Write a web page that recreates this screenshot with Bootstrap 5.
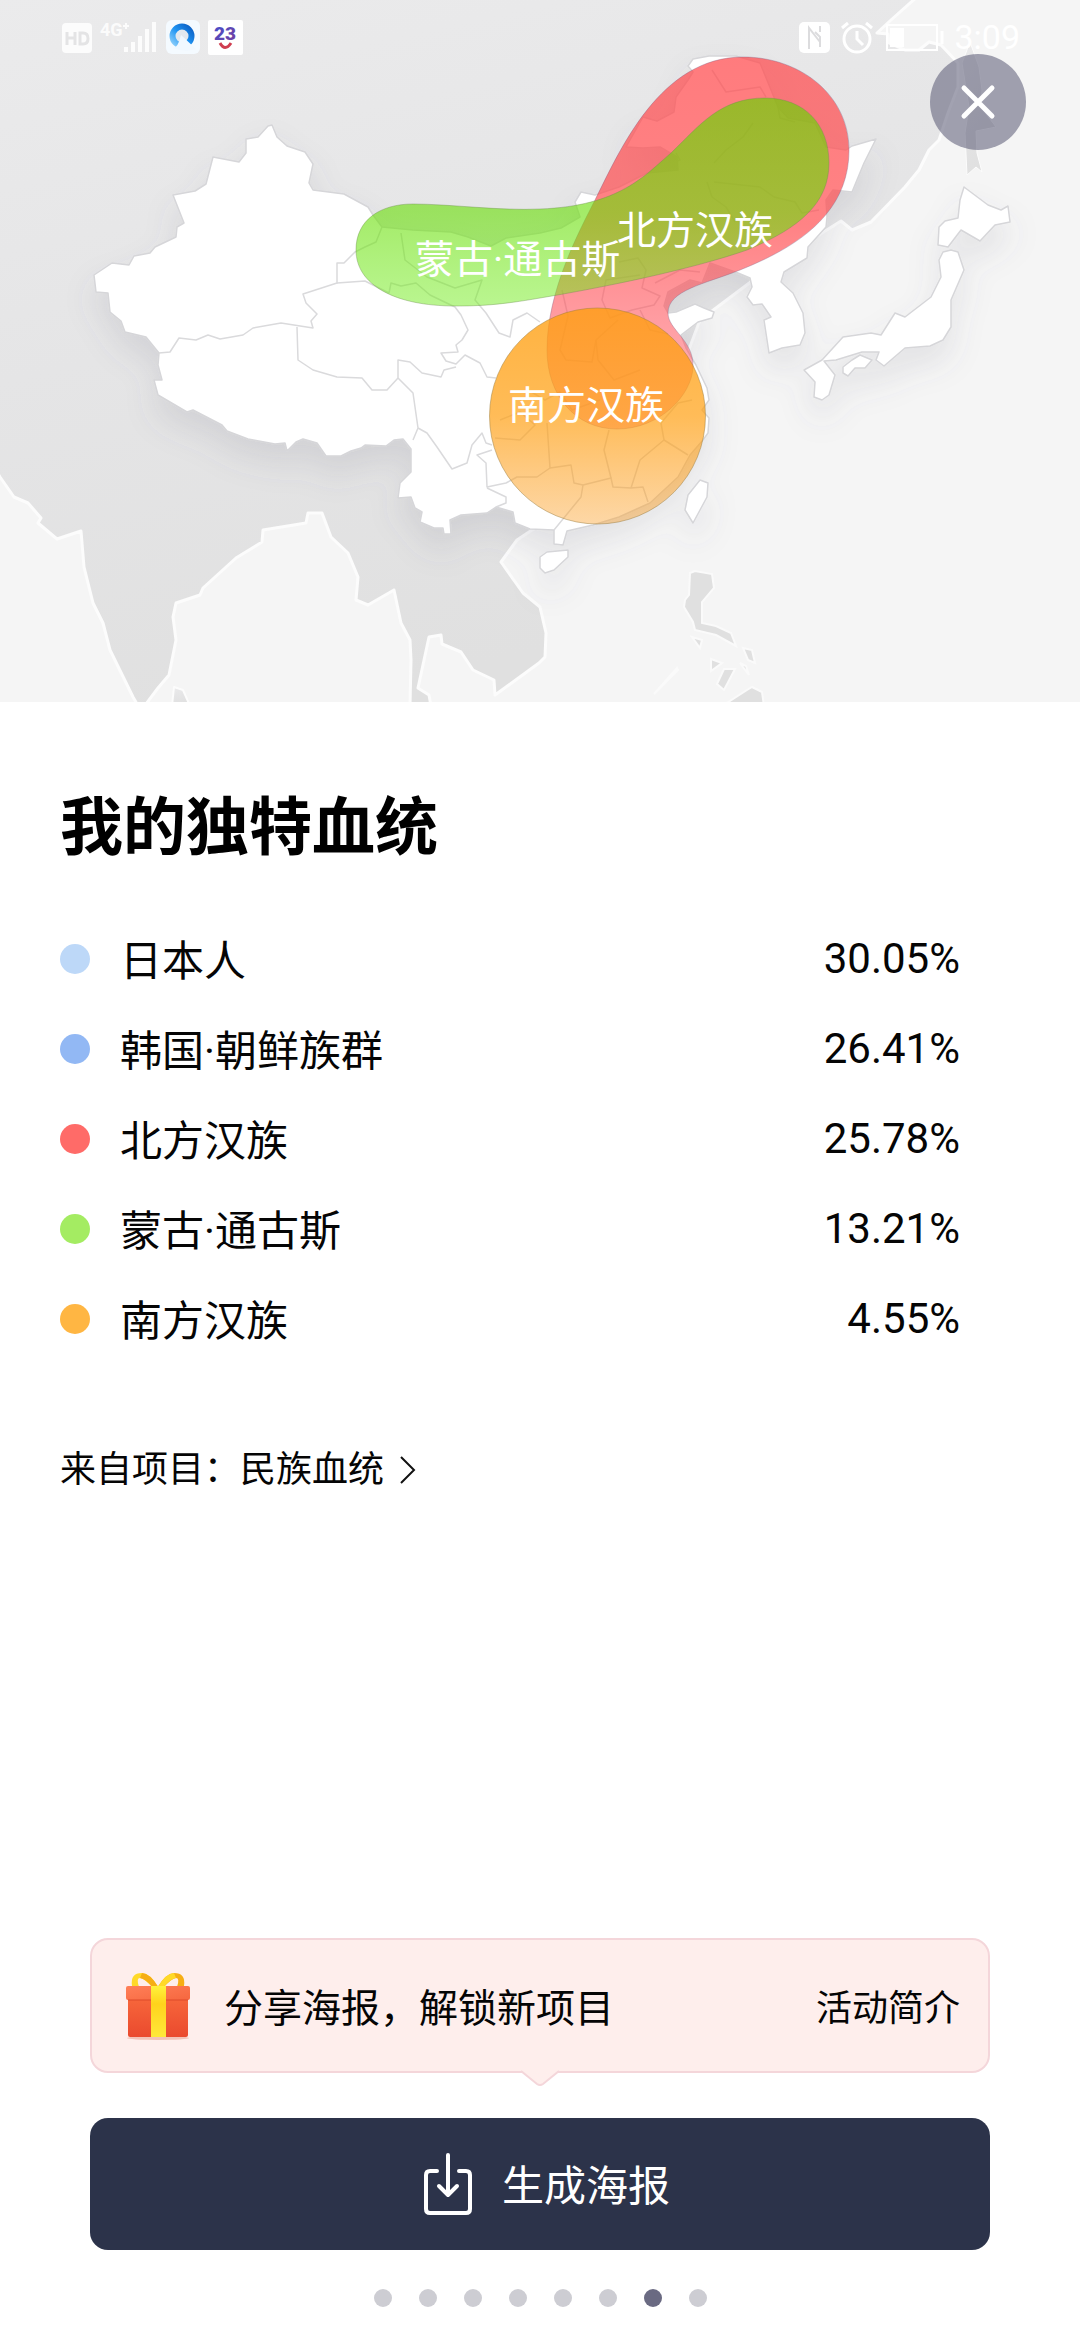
<!DOCTYPE html>
<html lang="zh-CN">
<head>
<meta charset="utf-8">
<meta name="viewport" content="width=device-width, initial-scale=1">
<title>我的独特血统</title>
<link rel="stylesheet" href="https://cdn.jsdelivr.net/npm/bootstrap@5.3.0/dist/css/bootstrap.min.css">
<style>
  body { font-family: Roboto, "Noto Sans CJK SC", sans-serif; color: #050505; background: #fff; }
  .map-art { display: block; width: 100%; height: auto; }
  .map-label { font-size: 39px; fill: #fff; }
  .status-bar { height: 74px; padding: 0 60px; color: #fff; }
  .clock-text { font-size: 34px; line-height: 40px; }
  .close-btn { top: 54px; right: 54px; width: 96px; height: 96px; background: rgba(88, 88, 114, .55); }
  .report { padding: 88px 60px 0; }
  .report-title { font-size: 63px; line-height: 76px; font-weight: 700; margin-bottom: 48px; color: #000; }
  .ancestry-row { height: 90px; padding-right: 60px; font-size: 42px; line-height: 50px; }
  .ancestry-dot { width: 30px; height: 30px; margin-right: 30px; }
  .ancestry-name { padding-top: 6px; }
  .source-link { margin-top: 84px; font-size: 36px; line-height: 44px; gap: 16px; color: #050505; }
  .page-foot { padding: 0 90px 33px; }
  .promo { min-height: 135px; padding: 0 28px 0 32px; background: #feeeec; border: 2px solid #f4d6da; border-radius: 18px; font-size: 39px; line-height: 48px; }
  .promo-gift { margin-right: 32px; }
  .promo-text { padding-top: 6px; }
  .promo-more { font-size: 36px; color: #050505; }
  .promo-tail { left: 50%; top: 100%; margin: -3px 0 0 -22px; }
  .make-btn { margin-top: 45px; min-height: 132px; padding: 0 0 0 14px; gap: 30px; border-radius: 18px; background: #2c334a; color: #fff; font-size: 42px; line-height: 50px; }
  .make-btn:hover { background: #363e58; color: #fff; }
  .pager { gap: 27px; margin-top: 39px; }
  .pager-dot { width: 18px; height: 18px; background: #cdcdd3; }
  .pager-dot.active { background: #6a6a82; }
</style>
</head>
<body>
<div class="d-flex flex-column min-vh-100">

  <header class="position-relative">
    <svg class="map-art" viewBox="0 0 1080 702" role="img" aria-label="血统分布地图">
      <defs>
        <linearGradient id="land" x1="0" y1="0" x2="0.3" y2="1"><stop offset="0" stop-color="#ebebec"/><stop offset=".5" stop-color="#e5e5e6"/><stop offset="1" stop-color="#e0e0e0"/></linearGradient>
        <linearGradient id="north" x1="0" y1="0" x2="0" y2="1"><stop offset="0" stop-color="#ff4d50" stop-opacity=".74"/><stop offset=".45" stop-color="#ff4d50" stop-opacity=".7"/><stop offset="1" stop-color="#ff5060" stop-opacity=".4"/></linearGradient>
        <linearGradient id="steppe" x1="0" y1="0" x2="0" y2="1"><stop offset="0" stop-color="#66d600" stop-opacity=".66"/><stop offset=".55" stop-color="#6cdf0c" stop-opacity=".62"/><stop offset="1" stop-color="#74ec20" stop-opacity=".5"/></linearGradient>
        <linearGradient id="south" x1="0" y1="0" x2="0" y2="1"><stop offset="0" stop-color="#ff9f10" stop-opacity=".8"/><stop offset=".5" stop-color="#ff9f10" stop-opacity=".7"/><stop offset="1" stop-color="#fba02a" stop-opacity=".42"/></linearGradient>
        <filter id="lift" x="-10%" y="-10%" width="120%" height="130%"><feDropShadow dx="0" dy="18" stdDeviation="15" flood-color="#606078" flood-opacity=".13"/></filter>
      </defs>
      <rect width="1080" height="702" fill="#f5f5f5"/>
      <!-- neighbouring land -->
      <g fill="url(#land)" stroke="#fcfcfc" stroke-width="3" stroke-linejoin="round">
        <path d="M-4-4H918L891 20 877 33 888 34 889 43 905 50 919 50 929 42 941 45 958 63 958 87 948 113 939 140 929 150 919 170 905 187 871 222 852 230 841 221 822 233 780 260 700 320 640 480 532 530 517 540 501 562 523 593 540 607 546 633 545 657 539 663 495 695 494 680 473 670 461 652 442 644 441 635 429 637 418 688 429 695 431 706H410L411 660 410 640 401 623 394 590 368 605 356 600 358 577 348 553 331 537 322 513 308 513 306 523 263 530 262 542 236 558 203 588 200 595 176 603 173 617 176 640 169 675 158 688 146 704 137 704 133 697 110 650 103 623 93 603 84 567 81 531 57 539 38 523 41 518 28 503 14 497 0 477-4 470Z"/>
        <path d="M172 706 174 687 183 690 190 706Z" stroke-width="2"/>
        <path d="M962 63 970 42 979 67 982 90 981 107 996 127 976 131 977 153 982 172 976 167 967 175 965 133 969 107Z" stroke-width="1"/>
      </g>
      <path d="M690 573 695 571 712 574 714 588 702 602 702 623 716 626 731 633 736 646 716 635 695 630 693 622 684 607 685 600 689 595ZM692 637 702 640 700 648ZM743 648 752 650 755 663 748 660ZM711 659 722 663 711 671ZM724 669 735 669 724 690 717 684ZM740 663 746 666 749 675ZM677 668 654 694 678 670ZM722 706 747 690 752 687 762 692 764 706Z" fill="#e0e0e0" stroke="#fafafa" stroke-width="2"/>
      <!-- highlighted countries -->
      <g fill="#fff" stroke="#d6d6d9" stroke-width="1.5" stroke-linejoin="round" filter="url(#lift)">
        <path d="M272 125 277 137 287 146 305 152 313 164 309 183 313 190 344 194 368 207 373 215 382 227 413 230 451 232 468 237 491 246 506 238 540 233 561 228 580 217 575 202 581 192 595 195 619 187 647 173 678 170 677 157 660 147 643 148 626 147 643 117 657 121 674 112 676 97 688 80 693 72 688 66 693 59 709 56 736 56 760 63 778 107 788 118 815 123 826 147 846 150 852 146 876 139 864 163 852 192 833 190 826 200 827 217 826 227 817 237 808 247 807 258 784 272 781 282 793 293 803 313 805 333 800 345 782 348 769 353 764 320 771 317 762 304 753 305 747 297 752 287 750 278 738 273 710 263 702 283 690 280 668 292 664 306 668 313 676 312 695 304 704 308 714 312 712 318 698 322 681 335 686 348 696 365 707 388 709 400 702 410 709 418 708 433 703 440 690 455 678 477 650 503 619 517 593 525 567 531 563 545 554 544 554 530 530 529 515 523 513 512 496 507 487 513 461 515 450 520 451 534 444 534 443 528 434 528 420 522 422 512 415 508 411 497 398 498 400 483 411 472 411 449 403 439 394 440 386 446 365 445 361 448 351 451 341 456 326 456 317 443 303 439 296 442 287 451 285 443 275 444 248 439 227 431 222 425 193 410 187 412 158 395 154 380 162 380 158 365 159 353 146 337 125 332 121 321 110 312 108 293 96 292 94 275 112 263 129 265 134 256 150 253 155 247 176 237 177 227 184 223 173 195 195 191 206 184 213 157 239 162 246 153 246 139 258 137 268 126Z"/>
        <path d="M964 187 988 205 1001 210 1008 206 1010 222 995 225 980 241 961 230 948 247 938 245 939 227 945 221 958 218 960 200Z"/>
        <path d="M943 252 951 250 958 252 964 270 951 300 951 327 943 340 930 346 905 348 884 366 876 360 879 352 862 352 836 360 824 361 835 375 829 395 822 400 814 397 815 382 804 370 822 360 843 337 871 333 881 335 895 313 905 317 931 297 941 277 939 260Z"/>
        <path d="M843 367 852 360 860 355 872 360 865 368 855 368 848 376 843 373ZM700 480 708 483 707 497 693 523 685 510 688 495ZM540 557 547 552 568 550 568 557 554 570 545 573 540 568Z"/>
      </g>
      <!-- province borders -->
      <g fill="none" stroke="#dadadc" stroke-width="1.5" stroke-linejoin="round">
        <path d="M159 353 170 352 179 338 196 340 208 335 220 339 243 335 253 328 281 323 313 328 311 321 317 314 306 303 303 294 337 283 337 263 344 263 355 252 365 247 376 242 382 227"/>
        <path d="M337 283 365 281 389 293 391 283 401 286 416 283 430 295 455 307 461 315 468 330 462 340 456 345 458 352 441 353 446 361 456 364 465 355 480 363 487 377 496 378"/>
        <path d="M297 327 298 360 313 370 337 377 362 378 372 390 387 390 398 378 398 360 410 362 422 373 441 377 444 370 456 367M398 378 413 393 418 428 413 440M418 428 427 433 437 447 452 469 467 463 472 445 482 433 486 443 492 445"/>
        <path d="M492 450 477 455 486 463 487 487 506 483 517 477 537 477 550 468 571 465 574 483 583 485 581 497 554 530M487 488 506 497 506 503 496 507M547 423 550 468M583 485 611 478 604 450 609 430M611 478 613 487 631 488 640 460 664 440 688 455M664 440 661 423 678 403 692 400M631 488 643 487 648 502"/>
        <path d="M401 233 405 260 427 277 455 288 482 280 475 300 486 313 499 333 510 337 513 320 527 313 540 322M712 70 726 92 760 87 766 97M707 182 712 197 726 207 735 222M714 182 760 187 774 197 795 202 802 213 819 210M714 163 726 150 743 137 753 123M647 173 680 160 676 153M778 107 780 118 795 122M619 262 638 258 646 270 642 288 660 296 654 305 632 310 610 318 602 300 606 280 640 275M655 283 680 270 700 272M562 290 568 316 560 350 566 360 592 362 596 340 618 320M596 340 598 360 614 380 640 370M640 310 650 330 668 334M528 390 545 400 560 392 572 410 600 400M500 420 520 412 535 425 520 440 495 438"/>
      </g>
      <!-- population areas -->
      <path d="M743 57C800 57 849 95 849 150C849 215 795 248 740 270C705 284 668 290 668 313C668 330 694 340 693 367C692 395 660 429 617 429C575 429 547 395 547 350C547 290 580 230 595 200C620 150 660 57 743 57Z" fill="url(#north)" stroke="#7c5c80" stroke-opacity=".35" stroke-width="1"/>
      <path d="M413 204C450 204 500 211 540 209C620 206 645 175 671 153C700 125 720 98 765 98C805 98 829 125 829 163C829 203 800 228 747 250C690 270 600 288 540 298C500 305 480 306 455 306C395 306 356 285 356 250C356 220 380 204 413 204Z" fill="url(#steppe)" stroke="#6f8f50" stroke-opacity=".4" stroke-width="1"/>
      <circle cx="597.5" cy="416" r="108" fill="url(#south)" stroke="#a08040" stroke-opacity=".5" stroke-width="1"/>
      <text class="map-label" x="415" y="273">蒙古·通古斯</text>
      <text class="map-label" x="617" y="244">北方汉族</text>
      <text class="map-label" x="508" y="419">南方汉族</text>
    </svg>

    <div class="status-bar position-absolute top-0 start-0 w-100 d-flex align-items-center justify-content-between">
      <div class="d-flex align-items-center">
        <svg width="98" height="34" viewBox="0 0 98 34" fill="#fff" fill-opacity=".85" aria-hidden="true">
          <rect x="2" y="3" width="30" height="30" rx="4"/>
          <path d="M7 12V25M15 12V25M7 18H15M20 13V24H23Q28 24 28 18.500Q28 13 23 13Z" fill="none" stroke="#e4e4e5" stroke-width="3"/>
          <text x="40" y="16" font-size="18" font-weight="700">4G</text>
          <path d="M65 3h2v2h2v2h-2v2h-2v-2h-2v-2h2z"/>
          <path d="M64 27h4v5h-4zM71 22h4v10h-4zM78 16h4v16h-4zM85 9h4v23h-4zM92 2h4v30h-4z"/>
        </svg>
        <svg class="ms-2" width="34" height="34" viewBox="0 0 34 34" aria-hidden="true">
          <defs><linearGradient id="ring" x1="1" y1="0" x2="0" y2="1"><stop offset="0" stop-color="#0b5fc4"/><stop offset=".5" stop-color="#1d93f2"/><stop offset="1" stop-color="#8fd0fb"/></linearGradient></defs>
          <rect width="34" height="34" rx="6" fill="#f4faff"/>
          <circle cx="16" cy="16" r="9.500" fill="#e3e8ee" stroke="url(#ring)" stroke-width="6"/>
          <path d="M15 15L30 29Q20 33 7 28Q12 28 15 15Z" fill="#f0f8ff"/>
        </svg>
        <svg class="ms-2" width="35" height="35" viewBox="0 0 35 35" aria-hidden="true">
          <defs><linearGradient id="num" x1="0" y1="0" x2="1" y2="1"><stop offset="0" stop-color="#3f4fd0"/><stop offset="1" stop-color="#7a3f9a"/></linearGradient></defs>
          <rect width="35" height="35" rx="2" fill="#fff"/>
          <text x="6" y="20" font-size="19" font-weight="900" fill="url(#num)">23</text>
          <path d="M12 23Q17 32 23 23" fill="none" stroke="#cf3e50" stroke-width="3"/>
        </svg>
      </div>
      <div class="d-flex align-items-center">
        <svg class="me-2" width="148" height="34" viewBox="0 0 148 34" fill="none" stroke="#fff" aria-hidden="true">
          <rect x="1" y="2" width="31" height="31" rx="5" fill="#fff" stroke="none"/>
          <path d="M11 29V8L22 22M17 12L22 17V27M22 6V12" stroke="#dcdcde" stroke-width="2"/>
          <circle cx="59" cy="19" r="13" stroke-width="3"/><path d="M59 11V19L65 25M44 8L50 3M68 3L74 8" stroke-width="3"/>
          <rect x="89" y="5" width="50" height="25" stroke-width="2"/><path d="M92 8h14v19H92z" fill="#fff" stroke="none"/><path d="M144 11V24" stroke-width="3"/>
        </svg>
        <span class="clock-text">3:09</span>
      </div>
    </div>

    <button type="button" class="close-btn btn border-0 rounded-circle p-0 position-absolute d-flex align-items-center justify-content-center" aria-label="关闭">
      <svg width="36" height="36" viewBox="0 0 36 36" stroke="#fff" stroke-width="5" stroke-linecap="round" aria-hidden="true"><path d="M4 4L32 32M32 4L4 32"/></svg>
    </button>
  </header>

  <main class="report">
    <h1 class="report-title">我的独特血统</h1>
    <ul class="list-unstyled mb-0">
      <li class="ancestry-row d-flex align-items-center"><span class="ancestry-dot rounded-circle" style="background:#bdd8f8"></span><span class="ancestry-name flex-grow-1">日本人</span><span>30.05%</span></li>
      <li class="ancestry-row d-flex align-items-center"><span class="ancestry-dot rounded-circle" style="background:#92b8f4"></span><span class="ancestry-name flex-grow-1">韩国·朝鲜族群</span><span>26.41%</span></li>
      <li class="ancestry-row d-flex align-items-center"><span class="ancestry-dot rounded-circle" style="background:#ff6b68"></span><span class="ancestry-name flex-grow-1">北方汉族</span><span>25.78%</span></li>
      <li class="ancestry-row d-flex align-items-center"><span class="ancestry-dot rounded-circle" style="background:#a4ec62"></span><span class="ancestry-name flex-grow-1">蒙古·通古斯</span><span>13.21%</span></li>
      <li class="ancestry-row d-flex align-items-center"><span class="ancestry-dot rounded-circle" style="background:#ffb643"></span><span class="ancestry-name flex-grow-1">南方汉族</span><span>4.55%</span></li>
    </ul>
    <a href="#" class="source-link d-inline-flex align-items-center text-decoration-none">来自项目：民族血统
      <svg width="16" height="28" viewBox="0 0 16 28" fill="none" stroke="#111" stroke-width="2" aria-hidden="true"><path d="M1 1L14 14L1 27"/></svg>
    </a>
  </main>

  <footer class="page-foot mt-auto">
    <div class="promo position-relative d-flex align-items-center">
      <svg class="promo-gift" width="68" height="70" viewBox="0 0 68 70" aria-hidden="true">
        <defs>
          <linearGradient id="gbox" x1="0" y1="0" x2="0" y2="1"><stop offset="0" stop-color="#f8683c"/><stop offset="1" stop-color="#ea4a2e"/></linearGradient>
          <linearGradient id="glid" x1="0" y1="0" x2="1" y2="1"><stop offset="0" stop-color="#ff7f58"/><stop offset="1" stop-color="#f6673f"/></linearGradient>
          <linearGradient id="grib" x1="0" y1="0" x2="0" y2="1"><stop offset="0" stop-color="#fff23c"/><stop offset=".35" stop-color="#ffd31c"/><stop offset="1" stop-color="#ffe83a"/></linearGradient>
        </defs>
        <ellipse cx="34" cy="67" rx="31" ry="2" fill="#f3c2b6"/>
        <path d="M8 15Q6 2 18 2Q26 2 35 17H29Q20 7 16 7Q12 7 15 16Z" fill="#ffd928"/>
        <path d="M18 2Q26 2 35 17H29Q22 8 16 7Z" fill="#f6ae14"/>
        <path d="M60 15Q62 2 50 2Q42 2 33 17H39Q48 7 52 7Q56 7 53 16Z" fill="#f6ae14"/>
        <path d="M50 2Q42 2 33 17H39Q46 8 52 7Z" fill="#ffd928"/>
        <rect x="4" y="25" width="60" height="41" rx="2" fill="url(#gbox)"/>
        <rect x="2" y="15" width="64" height="14" rx="2" fill="url(#glid)"/>
        <path d="M4 29H64" stroke="#de4a2a" stroke-width="1"/>
        <rect x="27" y="15" width="15" height="51" fill="url(#grib)"/>
      </svg>
      <span class="promo-text flex-grow-1">分享海报，解锁新项目</span>
      <a href="#" class="promo-text promo-more text-decoration-none">活动简介</a>
      <svg class="promo-tail position-absolute" width="44" height="20" viewBox="0 0 44 20" aria-hidden="true"><path d="M0 0H44V2H41L25 16Q22 18 19 16L3 2H0Z" fill="#feeeec"/><path d="M3 3L19 16Q22 18 25 16L41 3" fill="none" stroke="#f4d6da" stroke-width="2"/></svg>
    </div>
    <button type="button" class="make-btn btn border-0 w-100 d-flex align-items-center justify-content-center">
      <svg width="48" height="64" viewBox="0 0 48 64" fill="none" stroke="#fff" stroke-width="4" stroke-linecap="round" stroke-linejoin="round" aria-hidden="true"><path d="M13 19H6Q2 19 2 23V57Q2 61 6 61H42Q46 61 46 57V23Q46 19 42 19H35M24 3V42M15 34L24 43L33 34"/></svg>
      <span class="promo-text">生成海报</span>
    </button>
    <div class="pager d-flex justify-content-center" aria-hidden="true">
      <span class="pager-dot rounded-circle"></span><span class="pager-dot rounded-circle"></span><span class="pager-dot rounded-circle"></span><span class="pager-dot rounded-circle"></span><span class="pager-dot rounded-circle"></span><span class="pager-dot rounded-circle"></span><span class="pager-dot active rounded-circle"></span><span class="pager-dot rounded-circle"></span>
    </div>
  </footer>
</div>
<script src="https://cdn.jsdelivr.net/npm/bootstrap@5.3.0/dist/js/bootstrap.bundle.min.js"></script>
</body>
</html>
